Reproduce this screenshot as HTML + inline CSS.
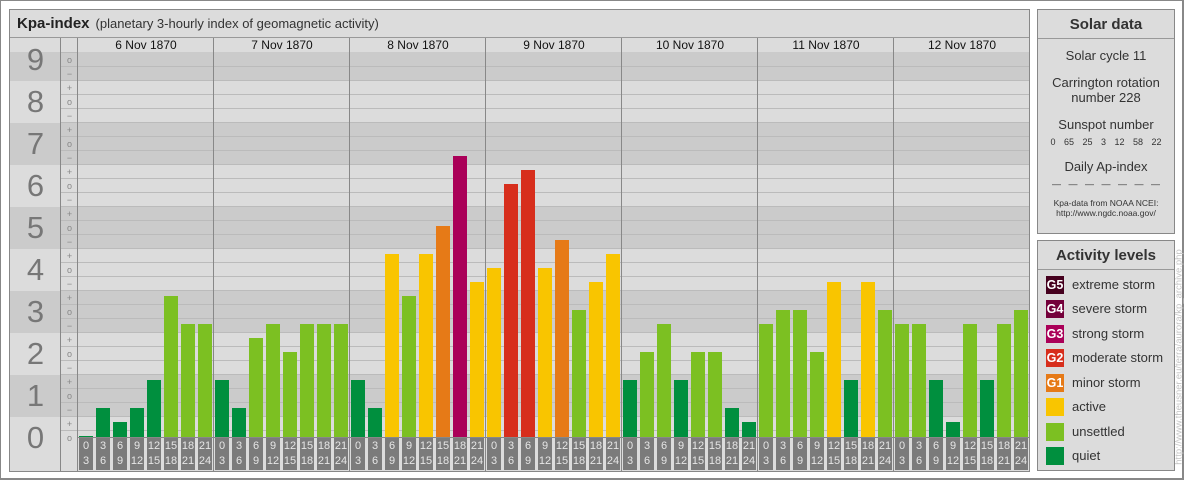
<!DOCTYPE html>
<html><head><meta charset="utf-8"><style>
*{margin:0;padding:0;box-sizing:border-box}
body{width:1184px;height:480px;background:#fff;font-family:"Liberation Sans",sans-serif;position:relative;overflow:hidden}
.a{position:absolute}
#outer{left:0;top:0;width:1184px;height:480px;border:1px solid #888;border-right-width:2px;border-bottom-width:2px}
#main{left:9px;top:9px;width:1021px;height:463px;border:1px solid #888;background:#dcdcdc;overflow:hidden}
.title{left:0;top:0;width:1019px;height:28px;border-bottom:1px solid #999;background:#dcdcdc;font-size:14px;color:#222;padding:5px 0 0 7px}
.title b{font-size:15px}
.title span{font-size:13px;color:#333;margin-left:6px}
.band{left:0;width:1021px;background:#cbcbcb}
.gl{left:51px;width:970px;height:1px;background:#bbb}
.vl{width:1px;background:#888}
.num{left:0;width:51px;text-align:center;font-size:31px;color:#777;height:34px;line-height:34px}
.sg{left:51px;width:17px;text-align:center;font-size:9px;color:#888;height:14px;line-height:14px}
.day{top:28px;width:136px;text-align:center;font-size:12px;color:#111;height:14px;line-height:15px}
.b{width:14px;margin-left:-1px}
.q{background:#008f3e}.u{background:#7cc022}.y{background:#f9c500}.o{background:#e67a17}.r{background:#d72e1c}.m{background:#aa0058}
.t{top:428px;width:14px;height:32px;background:#7b7b7b;color:#e6e6e6;font-size:11px;line-height:15px;text-align:center;padding-top:1px;margin-left:-1px}
.box{left:1037px;width:138px;border:1px solid #888;background:#dcdcdc}
.bh{height:29px;border-bottom:1px solid #999;text-align:center;font-weight:bold;font-size:15px;color:#333;line-height:29px}
.sd{text-align:center;color:#333;font-size:13px}
.sw{left:8px;width:18px;height:18px;color:#fff;font-size:12.5px;font-weight:bold;line-height:18px;text-align:center}
.lt{left:34px;font-size:13px;color:#333;line-height:18px}
</style></head><body>
<div class="a" id="outer"></div>
<div class="a" id="main">
<div class="a band" style="top:42px;height:29px"></div>
<div class="a band" style="top:113px;height:42px;"></div>
<div class="a band" style="top:197px;height:42px"></div>
<div class="a band" style="top:281px;height:42px"></div>
<div class="a band" style="top:365px;height:42px"></div>
<div class="a band" style="top:28px;height:14px;background:#dcdcdc"></div>
<div class="a title"><b>Kpa-index</b><span>(planetary 3-hourly index of geomagnetic activity)</span></div>
<div class="a gl" style="top:56px"></div><div class="a gl" style="top:70px"></div><div class="a gl" style="top:84px"></div><div class="a gl" style="top:98px"></div><div class="a gl" style="top:112px"></div><div class="a gl" style="top:126px"></div><div class="a gl" style="top:140px"></div><div class="a gl" style="top:154px"></div><div class="a gl" style="top:168px"></div><div class="a gl" style="top:182px"></div><div class="a gl" style="top:196px"></div><div class="a gl" style="top:210px"></div><div class="a gl" style="top:224px"></div><div class="a gl" style="top:238px"></div><div class="a gl" style="top:252px"></div><div class="a gl" style="top:266px"></div><div class="a gl" style="top:280px"></div><div class="a gl" style="top:294px"></div><div class="a gl" style="top:308px"></div><div class="a gl" style="top:322px"></div><div class="a gl" style="top:336px"></div><div class="a gl" style="top:350px"></div><div class="a gl" style="top:364px"></div><div class="a gl" style="top:378px"></div><div class="a gl" style="top:392px"></div><div class="a gl" style="top:406px"></div><div class="a gl" style="top:420px"></div>
<div class="a gl" style="top:42px;left:51px;width:17px"></div>
<div class="a vl" style="left:50px;top:28px;height:435px"></div>
<div class="a vl" style="left:67px;top:28px;height:435px"></div>
<div class="a vl" style="left:203px;top:28px;height:435px"></div>
<div class="a vl" style="left:339px;top:28px;height:435px"></div>
<div class="a vl" style="left:475px;top:28px;height:435px"></div>
<div class="a vl" style="left:611px;top:28px;height:435px"></div>
<div class="a vl" style="left:747px;top:28px;height:435px"></div>
<div class="a vl" style="left:883px;top:28px;height:435px"></div>
<div class="a" style="left:68px;top:427px;width:953px;height:1px;background:#888"></div>
<div class="a num" style="top:33px">9</div><div class="a num" style="top:75px">8</div><div class="a num" style="top:117px">7</div><div class="a num" style="top:159px">6</div><div class="a num" style="top:201px">5</div><div class="a num" style="top:243px">4</div><div class="a num" style="top:285px">3</div><div class="a num" style="top:327px">2</div><div class="a num" style="top:369px">1</div><div class="a num" style="top:411px">0</div>
<div class="a sg" style="top:43px">o</div><div class="a sg" style="top:57px">−</div><div class="a sg" style="top:71px">+</div><div class="a sg" style="top:85px">o</div><div class="a sg" style="top:99px">−</div><div class="a sg" style="top:113px">+</div><div class="a sg" style="top:127px">o</div><div class="a sg" style="top:141px">−</div><div class="a sg" style="top:155px">+</div><div class="a sg" style="top:169px">o</div><div class="a sg" style="top:183px">−</div><div class="a sg" style="top:197px">+</div><div class="a sg" style="top:211px">o</div><div class="a sg" style="top:225px">−</div><div class="a sg" style="top:239px">+</div><div class="a sg" style="top:253px">o</div><div class="a sg" style="top:267px">−</div><div class="a sg" style="top:281px">+</div><div class="a sg" style="top:295px">o</div><div class="a sg" style="top:309px">−</div><div class="a sg" style="top:323px">+</div><div class="a sg" style="top:337px">o</div><div class="a sg" style="top:351px">−</div><div class="a sg" style="top:365px">+</div><div class="a sg" style="top:379px">o</div><div class="a sg" style="top:393px">−</div><div class="a sg" style="top:407px">+</div><div class="a sg" style="top:421px">o</div>
<div class="a day" style="left:68px">6 Nov 1870</div><div class="a day" style="left:204px">7 Nov 1870</div><div class="a day" style="left:340px">8 Nov 1870</div><div class="a day" style="left:476px">9 Nov 1870</div><div class="a day" style="left:612px">10 Nov 1870</div><div class="a day" style="left:748px">11 Nov 1870</div><div class="a day" style="left:884px">12 Nov 1870</div>
<div class="a b q" style="left:70px;top:426px;height:1px"></div>
<div class="a b q" style="left:87px;top:398px;height:29px"></div>
<div class="a b q" style="left:104px;top:412px;height:15px"></div>
<div class="a b q" style="left:121px;top:398px;height:29px"></div>
<div class="a b q" style="left:138px;top:370px;height:57px"></div>
<div class="a b u" style="left:155px;top:286px;height:141px"></div>
<div class="a b u" style="left:172px;top:314px;height:113px"></div>
<div class="a b u" style="left:189px;top:314px;height:113px"></div>
<div class="a b q" style="left:206px;top:370px;height:57px"></div>
<div class="a b q" style="left:223px;top:398px;height:29px"></div>
<div class="a b u" style="left:240px;top:328px;height:99px"></div>
<div class="a b u" style="left:257px;top:314px;height:113px"></div>
<div class="a b u" style="left:274px;top:342px;height:85px"></div>
<div class="a b u" style="left:291px;top:314px;height:113px"></div>
<div class="a b u" style="left:308px;top:314px;height:113px"></div>
<div class="a b u" style="left:325px;top:314px;height:113px"></div>
<div class="a b q" style="left:342px;top:370px;height:57px"></div>
<div class="a b q" style="left:359px;top:398px;height:29px"></div>
<div class="a b y" style="left:376px;top:244px;height:183px"></div>
<div class="a b u" style="left:393px;top:286px;height:141px"></div>
<div class="a b y" style="left:410px;top:244px;height:183px"></div>
<div class="a b o" style="left:427px;top:216px;height:211px"></div>
<div class="a b m" style="left:444px;top:146px;height:281px"></div>
<div class="a b y" style="left:461px;top:272px;height:155px"></div>
<div class="a b y" style="left:478px;top:258px;height:169px"></div>
<div class="a b r" style="left:495px;top:174px;height:253px"></div>
<div class="a b r" style="left:512px;top:160px;height:267px"></div>
<div class="a b y" style="left:529px;top:258px;height:169px"></div>
<div class="a b o" style="left:546px;top:230px;height:197px"></div>
<div class="a b u" style="left:563px;top:300px;height:127px"></div>
<div class="a b y" style="left:580px;top:272px;height:155px"></div>
<div class="a b y" style="left:597px;top:244px;height:183px"></div>
<div class="a b q" style="left:614px;top:370px;height:57px"></div>
<div class="a b u" style="left:631px;top:342px;height:85px"></div>
<div class="a b u" style="left:648px;top:314px;height:113px"></div>
<div class="a b q" style="left:665px;top:370px;height:57px"></div>
<div class="a b u" style="left:682px;top:342px;height:85px"></div>
<div class="a b u" style="left:699px;top:342px;height:85px"></div>
<div class="a b q" style="left:716px;top:398px;height:29px"></div>
<div class="a b q" style="left:733px;top:412px;height:15px"></div>
<div class="a b u" style="left:750px;top:314px;height:113px"></div>
<div class="a b u" style="left:767px;top:300px;height:127px"></div>
<div class="a b u" style="left:784px;top:300px;height:127px"></div>
<div class="a b u" style="left:801px;top:342px;height:85px"></div>
<div class="a b y" style="left:818px;top:272px;height:155px"></div>
<div class="a b q" style="left:835px;top:370px;height:57px"></div>
<div class="a b y" style="left:852px;top:272px;height:155px"></div>
<div class="a b u" style="left:869px;top:300px;height:127px"></div>
<div class="a b u" style="left:886px;top:314px;height:113px"></div>
<div class="a b u" style="left:903px;top:314px;height:113px"></div>
<div class="a b q" style="left:920px;top:370px;height:57px"></div>
<div class="a b q" style="left:937px;top:412px;height:15px"></div>
<div class="a b u" style="left:954px;top:314px;height:113px"></div>
<div class="a b q" style="left:971px;top:370px;height:57px"></div>
<div class="a b u" style="left:988px;top:314px;height:113px"></div>
<div class="a b u" style="left:1005px;top:300px;height:127px"></div>
<div class="a t" style="left:70px">0<br>3</div><div class="a t" style="left:87px">3<br>6</div><div class="a t" style="left:104px">6<br>9</div><div class="a t" style="left:121px">9<br>12</div><div class="a t" style="left:138px">12<br>15</div><div class="a t" style="left:155px">15<br>18</div><div class="a t" style="left:172px">18<br>21</div><div class="a t" style="left:189px">21<br>24</div>
<div class="a t" style="left:206px">0<br>3</div><div class="a t" style="left:223px">3<br>6</div><div class="a t" style="left:240px">6<br>9</div><div class="a t" style="left:257px">9<br>12</div><div class="a t" style="left:274px">12<br>15</div><div class="a t" style="left:291px">15<br>18</div><div class="a t" style="left:308px">18<br>21</div><div class="a t" style="left:325px">21<br>24</div>
<div class="a t" style="left:342px">0<br>3</div><div class="a t" style="left:359px">3<br>6</div><div class="a t" style="left:376px">6<br>9</div><div class="a t" style="left:393px">9<br>12</div><div class="a t" style="left:410px">12<br>15</div><div class="a t" style="left:427px">15<br>18</div><div class="a t" style="left:444px">18<br>21</div><div class="a t" style="left:461px">21<br>24</div>
<div class="a t" style="left:478px">0<br>3</div><div class="a t" style="left:495px">3<br>6</div><div class="a t" style="left:512px">6<br>9</div><div class="a t" style="left:529px">9<br>12</div><div class="a t" style="left:546px">12<br>15</div><div class="a t" style="left:563px">15<br>18</div><div class="a t" style="left:580px">18<br>21</div><div class="a t" style="left:597px">21<br>24</div>
<div class="a t" style="left:614px">0<br>3</div><div class="a t" style="left:631px">3<br>6</div><div class="a t" style="left:648px">6<br>9</div><div class="a t" style="left:665px">9<br>12</div><div class="a t" style="left:682px">12<br>15</div><div class="a t" style="left:699px">15<br>18</div><div class="a t" style="left:716px">18<br>21</div><div class="a t" style="left:733px">21<br>24</div>
<div class="a t" style="left:750px">0<br>3</div><div class="a t" style="left:767px">3<br>6</div><div class="a t" style="left:784px">6<br>9</div><div class="a t" style="left:801px">9<br>12</div><div class="a t" style="left:818px">12<br>15</div><div class="a t" style="left:835px">15<br>18</div><div class="a t" style="left:852px">18<br>21</div><div class="a t" style="left:869px">21<br>24</div>
<div class="a t" style="left:886px">0<br>3</div><div class="a t" style="left:903px">3<br>6</div><div class="a t" style="left:920px">6<br>9</div><div class="a t" style="left:937px">9<br>12</div><div class="a t" style="left:954px">12<br>15</div><div class="a t" style="left:971px">15<br>18</div><div class="a t" style="left:988px">18<br>21</div><div class="a t" style="left:1005px">21<br>24</div>
</div>

<div class="a box" style="top:9px;height:225px">
<div class="bh">Solar data</div>
<div class="sd" style="margin-top:9px">Solar cycle 11</div>
<div class="sd" style="margin-top:12px;line-height:15px">Carrington rotation<br>number 228</div>
<div class="sd" style="margin-top:12px">Sunspot number</div>
<div class="sd" style="font-size:9px;margin-top:5px;word-spacing:6px">0 65 25 3 12 58 22</div>
<div class="sd" style="margin-top:12px">Daily Ap-index</div>
<div class="sd" style="font-size:9px;margin-top:5px;word-spacing:5px">— — — — — — —</div>
<div class="sd" style="font-size:8.5px;margin-top:9px;line-height:10px">Kpa-data from NOAA NCEI:<br>http://www.ngdc.noaa.gov/</div>
</div>

<div class="a box" style="top:240px;height:231px">
<div class="bh">Activity levels</div>
<div class="a sw" style="top:35px;background:#45001e">G5</div><div class="a lt" style="top:35px">extreme storm</div>
<div class="a sw" style="top:59px;background:#74003a">G4</div><div class="a lt" style="top:59px">severe storm</div>
<div class="a sw" style="top:84px;background:#aa0058">G3</div><div class="a lt" style="top:84px">strong storm</div>
<div class="a sw" style="top:108px;background:#d72e1c">G2</div><div class="a lt" style="top:108px">moderate storm</div>
<div class="a sw" style="top:133px;background:#e67a17">G1</div><div class="a lt" style="top:133px">minor storm</div>
<div class="a sw" style="top:157px;background:#f9c500"></div><div class="a lt" style="top:157px">active</div>
<div class="a sw" style="top:182px;background:#7cc022"></div><div class="a lt" style="top:182px">unsettled</div>
<div class="a sw" style="top:206px;background:#008f3e"></div><div class="a lt" style="top:206px">quiet</div>
</div>

<div class="a" style="left:1179px;top:357px;width:0;height:0"><div style="position:absolute;transform:translate(-50%,-50%) rotate(-90deg);white-space:nowrap;font-size:9.5px;color:#c4c4c4">http://www.theusner.eu/terra/aurora/kp_archive.php</div></div>
</body></html>
